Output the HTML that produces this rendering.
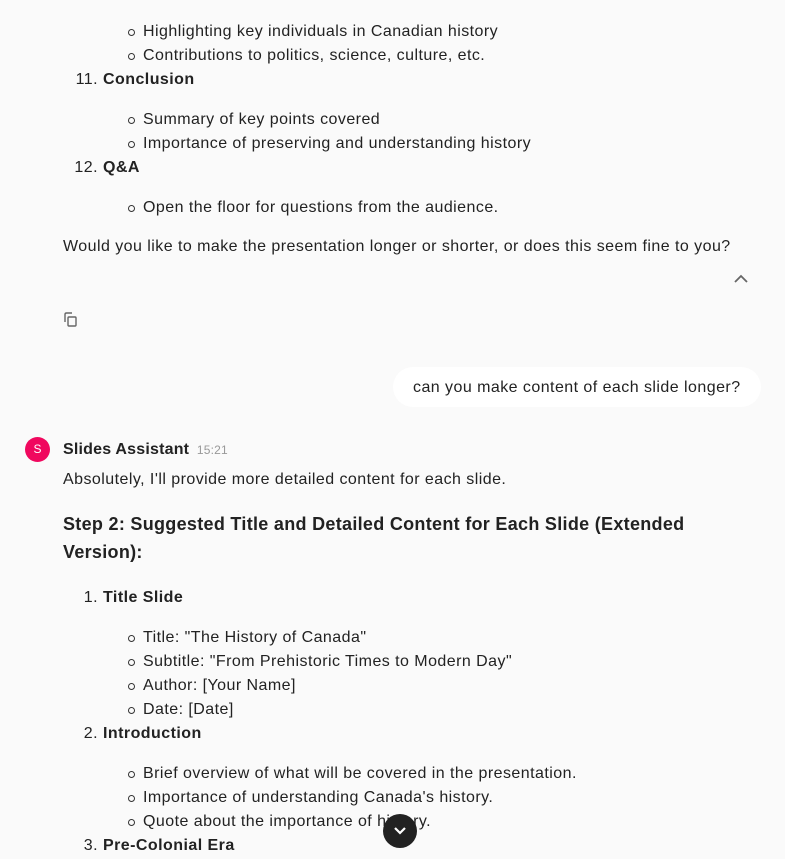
<html><head><style>
body{margin:0;width:785px;height:859px;background:#fafafa;font-family:"Liberation Sans",sans-serif;color:#222;font-size:16px;overflow:hidden;position:relative;letter-spacing:0.45px}
.l{position:absolute;line-height:24px;white-space:nowrap;margin-top:1px}
.b{left:143px}
.b::before{content:"";position:absolute;left:-15px;top:9px;width:5px;height:5px;border:1px solid #333;border-radius:50%}
.n{left:63px;width:35px;text-align:right}
.t{left:103px;font-weight:bold}
</style></head><body>
<div class="l b" style="top:19px">Highlighting key individuals in Canadian history</div>
<div class="l b" style="top:43px">Contributions to politics, science, culture, etc.</div>
<div class="l n" style="top:67px">11.</div><div class="l t" style="top:67px">Conclusion</div>
<div class="l b" style="top:107px">Summary of key points covered</div>
<div class="l b" style="top:131px">Importance of preserving and understanding history</div>
<div class="l n" style="top:155px">12.</div><div class="l t" style="top:155px">Q&amp;A</div>
<div class="l b" style="top:195px">Open the floor for questions from the audience.</div>
<div class="l" style="top:234px;left:63px">Would you like to make the presentation longer or shorter, or does this seem fine to you?</div>
<svg style="position:absolute;left:733px;top:273px" width="16" height="12"><path d="M2 9L8 3L14 9" fill="none" stroke="#666" stroke-width="1.8"/></svg>
<svg style="position:absolute;left:62px;top:311px" width="18" height="18"><rect x="6" y="6" width="8" height="9" rx="1" fill="none" stroke="#666" stroke-width="1.4"/><path d="M3 11V3.5Q3 2 4.5 2H10" fill="none" stroke="#666" stroke-width="1.4"/></svg>
<div style="position:absolute;left:393px;top:367px;width:368px;height:40px;background:#fff;border-radius:20px"></div>
<div class="l" style="top:375px;left:413px">can you make content of each slide longer?</div>
<div style="position:absolute;left:25px;top:437px;width:25px;height:25px;border-radius:50%;background:#f0085e;color:#fff;font-size:12px;text-align:center;line-height:25px;letter-spacing:0">S</div>
<div class="l" style="top:437px;left:63px;font-weight:bold;letter-spacing:0.2px">Slides Assistant <span style="font-weight:normal;color:#999;font-size:12px;margin-left:3px">15:21</span></div>
<div class="l" style="top:467px;left:63px">Absolutely, I'll provide more detailed content for each slide.</div>
<div class="l" style="top:509px;left:63px;font-size:18px;font-weight:bold;line-height:28px;white-space:normal;width:690px;letter-spacing:0.3px">Step 2: Suggested Title and Detailed Content for Each Slide (Extended Version):</div>
<div class="l n" style="top:585px">1.</div><div class="l t" style="top:585px">Title Slide</div>
<div class="l b" style="top:625px">Title: "The History of Canada"</div>
<div class="l b" style="top:649px">Subtitle: "From Prehistoric Times to Modern Day"</div>
<div class="l b" style="top:673px">Author: [Your Name]</div>
<div class="l b" style="top:697px">Date: [Date]</div>
<div class="l n" style="top:721px">2.</div><div class="l t" style="top:721px">Introduction</div>
<div class="l b" style="top:761px">Brief overview of what will be covered in the presentation.</div>
<div class="l b" style="top:785px">Importance of understanding Canada's history.</div>
<div class="l b" style="top:809px">Quote about the importance of history.</div>
<div class="l n" style="top:833px">3.</div><div class="l t" style="top:833px">Pre-Colonial Era</div>
<div style="position:absolute;left:383px;top:814px;width:34px;height:34px;border-radius:50%;background:#222"></div>
<svg style="position:absolute;left:391px;top:824px" width="18" height="14"><path d="M4 4L9 9L14 4" fill="none" stroke="#fff" stroke-width="2.2"/></svg>
</body></html>
